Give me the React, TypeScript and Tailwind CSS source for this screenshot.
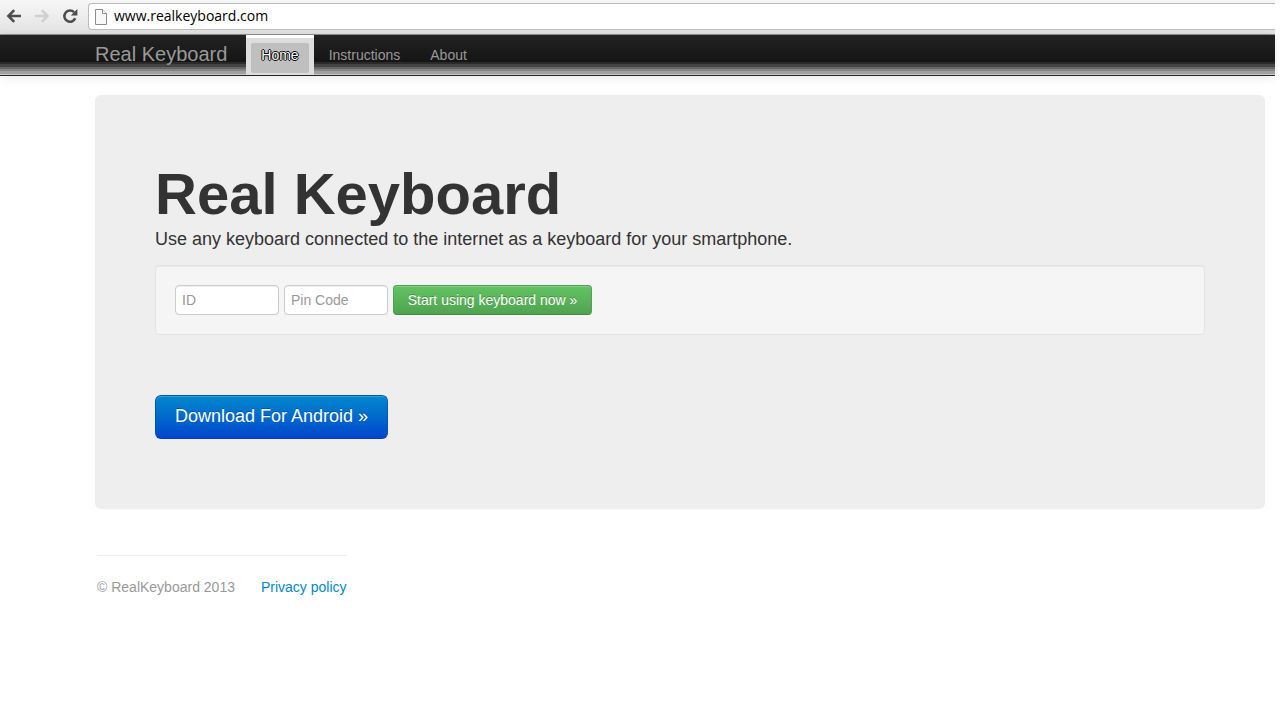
function BackIcon() {
  return (
    <svg width="16" height="16" viewBox="0 0 16 16" fill="none" stroke="currentColor" strokeWidth="2.6" aria-hidden="true">
      <path d="M2.5 8H15M8.2 2.2L2.4 8l5.8 5.8" />
    </svg>
  )
}

function ForwardIcon() {
  return (
    <svg width="16" height="16" viewBox="0 0 16 16" fill="none" stroke="currentColor" strokeWidth="2.6" aria-hidden="true">
      <path d="M1 8h12.5M7.8 2.2L13.6 8l-5.8 5.8" />
    </svg>
  )
}

function ReloadIcon() {
  return (
    <svg width="16" height="16" viewBox="0 0 16 16" fill="none" aria-hidden="true">
      <path d="M13.2 10.2A5.6 5.6 0 1 1 12 4.2" stroke="currentColor" strokeWidth="2.6" />
      <path d="M15.4 1v6.6H8.8z" fill="currentColor" />
    </svg>
  )
}

function PageIcon() {
  return (
    <svg width="12" height="16" viewBox="0 0 12 16" className="shrink-0" aria-hidden="true">
      <path d="M.5 .5h7l4 4v11H.5z" fill="#f8f8f8" stroke="#8c8c8c" />
      <path d="M7.5 .5v4h4" fill="#fff" stroke="#8c8c8c" />
    </svg>
  )
}

function BrowserBar() {
  return (
    <div className="flex h-[35px] items-start border-b border-[#8f8f8f] bg-linear-to-b from-[#f7f7f7] to-[#e2e2e2] pt-[3px] pl-1.5">
      <div className="flex gap-3 pt-[5px] pr-[10px] text-[#4d4d4d]">
        <button type="button" title="Back">
          <BackIcon />
        </button>
        <button type="button" title="Forward" className="text-[#d0d0d0]">
          <ForwardIcon />
        </button>
        <button type="button" title="Reload">
          <ReloadIcon />
        </button>
      </div>
      <div className="flex h-[27px] flex-1 items-start gap-[7px] rounded-l-[4px] border border-r-0 border-[#bbb] bg-white pt-[5px] pl-[6px]">
        <PageIcon />
        <input
          type="text"
          aria-label="Address"
          defaultValue="www.realkeyboard.com"
          className="h-4 min-w-0 flex-1 bg-transparent pb-[3px] text-[14px] text-black outline-none [font-family:'Open_Sans','Noto_Sans',sans-serif]"
        />
      </div>
    </div>
  )
}

function NavBar() {
  return (
    <nav className="flex h-[41px] border-b border-[#252525] bg-[linear-gradient(#222,#151515_27px,#2a2a2a_27px,#2a2a2a_29px,#444_29px,#444_32px,#666_32px,#666_34px,#858585_34px,#858585_36px,#a0a0a0_36px,#a0a0a0_39px,#c8c8c8_39px)] pl-[95px] text-[14px] leading-5 text-[#999] shadow-[0_1px_10px_rgba(0,0,0,0.1)]">
      <a href="#" className="pt-[9px] pr-[19px] text-[20px]">
        Real Keyboard
      </a>
      <a href="#" className="border-t-[3px] border-white bg-[#ddd] px-[5px] pt-[5px] pb-[2px] text-white">
        <span className="block h-[30px] rounded-[2px] bg-[#bfbfbf] px-[10px] pt-[2px] [text-shadow:-1px_0_#000,1px_0_#000,0_-1px_#000,0_1px_#000]">
          Home
        </span>
      </a>
      <a href="#instructions" className="px-[15px] pt-[10px]">
        Instructions
      </a>
      <a href="#about" className="px-[15px] pt-[10px]">
        About
      </a>
    </nav>
  )
}

const field =
  "h-[30px] w-[104px] rounded-[4px] border border-[#ccc] bg-white px-1.5 text-[14px] leading-5 text-[#555] shadow-[inset_0_1px_1px_rgba(0,0,0,0.075)] placeholder:text-[#999]"

function Hero() {
  return (
    <main className="mr-[10px] ml-[95px] rounded-[6px] bg-[#eee] px-[60px] pt-[69px] pb-[70px]">
      <h1 className="text-[58px] leading-[60px] font-bold">Real Keyboard</h1>
      <p className="text-[18px] leading-[30px]">
        Use any keyboard connected to the internet as a keyboard for your smartphone.
      </p>
      <form
        onSubmit={(e) => e.preventDefault()}
        className="mt-[11px] flex gap-[5px] rounded-[4px] border border-[#e3e3e3] bg-[#f5f5f5] p-[19px] shadow-[inset_0_1px_1px_rgba(0,0,0,0.05)]"
      >
        <input type="text" aria-label="ID" placeholder="ID" className={field} />
        <input type="text" aria-label="Pin Code" placeholder="Pin Code" className={field} />
        <button
          type="submit"
          className="h-[30px] w-[199px] rounded-[4px] border border-[#51a351] border-b-[#438a43] bg-linear-to-b from-[#62c462] to-[#51a351] text-[14px] leading-5 text-white shadow-[inset_0_1px_0_rgba(255,255,255,0.2)] [text-shadow:0_-1px_0_rgba(0,0,0,0.25)]"
        >
          Start using keyboard now »
        </button>
      </form>
      <a
        href="#download"
        className="mt-[60px] inline-block rounded-[6px] border border-[#05b] border-b-[#003db0] bg-linear-to-b from-[#08c] to-[#04c] px-[19px] pt-[5px] pb-[7px] text-[18px] leading-[30px] text-white shadow-[inset_0_1px_0_rgba(255,255,255,0.2)] [text-shadow:0_-1px_0_rgba(0,0,0,0.25)]"
      >
        Download For Android »
      </a>
    </main>
  )
}

export default function App() {
  return (
    <div className="bg-white text-[#333] [font-family:'Liberation_Sans',Arial,sans-serif]">
      <div className="mr-[5px]">
        <BrowserBar />
        <NavBar />
        <div className="pt-[19px]">
          <Hero />
        </div>
        <footer className="mt-[46px] ml-[97px] inline-flex gap-[26px] border-t border-[#eee] pt-[21px] text-[14px] leading-5 text-[#999]">
          <p>© RealKeyboard 2013</p>
          <a href="#privacy" className="text-[#08c]">
            Privacy policy
          </a>
        </footer>
      </div>
    </div>
  )
}
